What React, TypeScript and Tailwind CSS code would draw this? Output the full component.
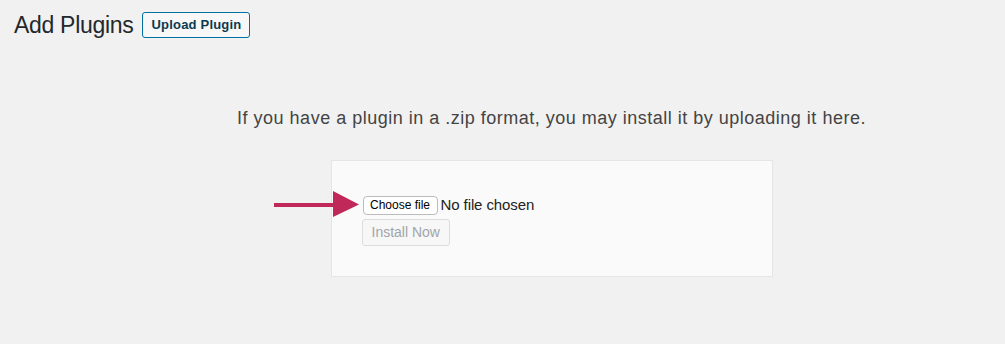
import React from "react";

export default function App() {
  return (
    <div
      className="w-[1005px] h-[344px] bg-[#f1f1f1] relative overflow-hidden"
      style={{ fontFamily: "'Liberation Sans', Arial, sans-serif" }}
    >
      <div className="flex items-center pl-[14px] pt-[12px] gap-[9px]">
        <h1 className="text-[23px] leading-[26px] tracking-[-0.3px] text-[#23282d] font-normal">Add Plugins</h1>
        <button className="h-[26px] px-[8px] border border-[#0071a1] rounded-[3px] bg-[#f7f7f7] text-[13px] font-bold tracking-[0.2px] text-[#0a3a4f]">
          Upload Plugin
        </button>
      </div>
      <div className="flex flex-col items-center pl-[98px]">
        <p className="mt-[69px] text-[18px] leading-[22px] tracking-[0.5px] text-[#444]">
          If you have a plugin in a .zip format, you may install it by uploading it here.
        </p>
        <div className="mt-[31px] w-[442px] h-[117px] bg-[#fafafa] border border-[#e5e5e5] pl-[31px] pt-[35px] flex flex-col items-start relative">
          <div className="flex items-center gap-[3px]">
            <button className="h-[19px] px-[6.5px] bg-white border border-[#bcbcbc] rounded-[4px] text-[12px] leading-[17px] text-black">
              Choose file
            </button>
            <span className="text-[15px] leading-[19px] tracking-[-0.1px] text-[#222] -mt-[3px]">No file chosen</span>
          </div>
          <button className="mt-[4px] -ml-[1px] h-[27px] px-[9px] border border-[#dddddd] rounded-[3px] bg-[#f7f7f7] text-[14px] text-[#a0a5aa]">
            Install Now
          </button>
          <svg
            className="absolute left-[-58px] top-[30px]"
            width="86"
            height="27"
            viewBox="0 0 86 27"
          >
            <rect x="0" y="12" width="64" height="4" fill="#c0285a" />
            <polygon points="59,0 85,13.5 59,26" fill="#c0285a" />
          </svg>
        </div>
      </div>
    </div>
  );
}
